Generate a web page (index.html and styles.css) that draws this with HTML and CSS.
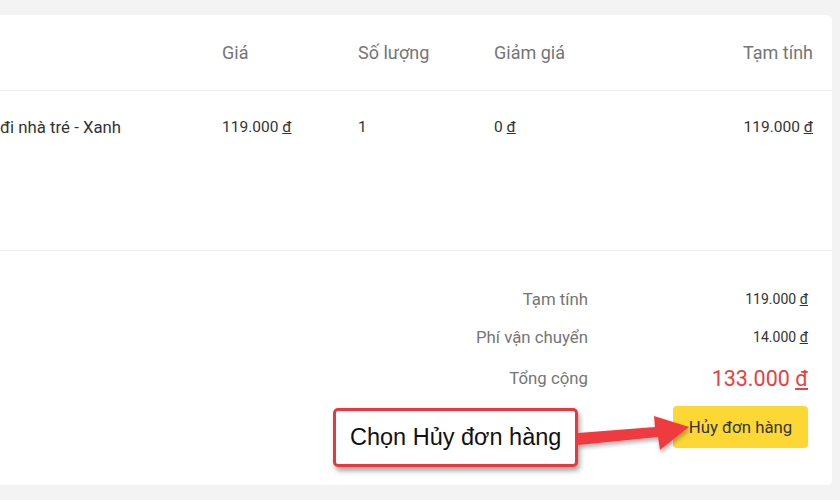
FILE: index.html
```html
<!DOCTYPE html>
<html lang="vi">
<head>
<meta charset="utf-8">
<link rel="stylesheet" href="styles.css">
</head>
<body>
<div class="card">
  <div class="thead">
    <div></div>
    <div>Giá</div>
    <div>Số lượng</div>
    <div>Giảm giá</div>
    <div class="right">Tạm tính</div>
  </div>
  <div class="trow">
    <div class="name">đi nhà tré - Xanh</div>
    <div>119.000 <span class="cur">đ</span></div>
    <div>1</div>
    <div>0 <span class="cur">đ</span></div>
    <div class="right">119.000 <span class="cur">đ</span></div>
  </div>
  <div class="summary">
    <div class="srow"><div class="label">Tạm tính</div><div class="val">119.000 <span class="cur">đ</span></div></div>
    <div class="srow"><div class="label">Phí vận chuyển</div><div class="val">14.000 <span class="cur">đ</span></div></div>
    <div class="srow total"><div class="label">Tổng cộng</div><div class="val">133.000 <span class="cur">đ</span></div></div>
    <div class="actions"><button class="cancel">Hủy đơn hàng</button></div>
  </div>
</div>
<div class="callout">Chọn Hủy đơn hàng</div>
<svg class="arrow" width="130" height="60" viewBox="0 0 130 60">
  <defs>
    <filter id="sh" x="-20%" y="-20%" width="140%" height="160%">
      <feDropShadow dx="1" dy="3" stdDeviation="2" flood-color="#000" flood-opacity="0.3"/>
    </filter>
  </defs>
  <polygon filter="url(#sh)" fill="#ef3b40" points="0,23 77,17 76,6 111,17 82,40 80,27 0,35"/>
</svg>
</body>
</html>
```
FILE: styles.css
```css
html, body {
  margin: 0;
  padding: 0;
}
body {
  background: #f3f3f3;
  width: 840px;
  height: 500px;
  overflow: hidden;
  position: relative;
  font-family: Roboto, "Noto Sans", Arial, sans-serif;
  color: #333;
}
.card {
  margin-top: 15px;
  width: 832px;
  height: 470px;
  background: #fff;
  border-radius: 0 5px 5px 0;
}
.thead, .trow {
  display: grid;
  grid-template-columns: 222px 136px 136px 1fr auto;
  padding-right: 19px;
}
.thead {
  height: 75px;
  align-items: center;
  border-bottom: 1px solid #eeeeee;
  font-size: 18px;
  color: #757575;
}
.trow {
  height: 133px;
  padding-top: 26px;
  align-items: start;
  line-height: 20px;
  font-size: 15.5px;
  border-bottom: 1px solid #eeeeee;
  color: #333;
}
.name { font-size: 16.8px; }
.right { text-align: right; }
.cur { text-decoration: underline; }
.summary {
  padding-top: 36px;
  padding-right: 24px;
  display: flex;
  flex-direction: column;
  gap: 14px;
}
.srow {
  display: grid;
  grid-template-columns: 1fr 220px;
  height: 24px;
  align-items: center;
}
.label {
  text-align: right;
  font-size: 16.8px;
  color: #757575;
}
.val {
  text-align: right;
  font-size: 14px;
  color: #333;
}
.total { height: 30px; }
.total .val {
  font-size: 21.5px;
  color: #e74141;
}
.actions {
  display: flex;
  justify-content: flex-end;
  margin-top: -1px;
}
.cancel {
  width: 135px;
  height: 42px;
  border: none;
  border-radius: 4px;
  background: #fdd835;
  color: #333;
  font-family: Roboto, "Noto Sans", Arial, sans-serif;
  font-size: 16.8px;
  padding: 0;
}
.callout {
  position: absolute;
  left: 333px;
  top: 408px;
  height: 53px;
  width: 225px;
  border: 3px solid #e8383d;
  border-radius: 5px;
  background: #fff;
  box-shadow: 2px 4px 5px rgba(0,0,0,0.35);
  font-family: "Liberation Sans", Arial, sans-serif;
  font-size: 23.5px;
  color: #111;
  display: flex;
  align-items: center;
  padding-left: 14px;
  box-sizing: content-box;
  white-space: nowrap;
}
.arrow {
  position: absolute;
  left: 578px;
  top: 410px;
}
```
